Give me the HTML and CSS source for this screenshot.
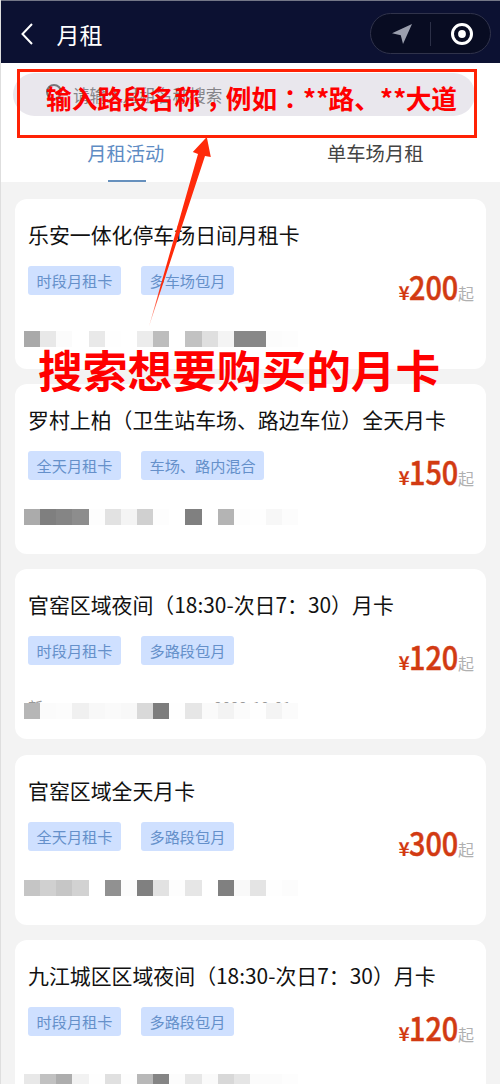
FILE: index.html
```html
<!DOCTYPE html>
<html lang="zh-CN">
<head>
<meta charset="utf-8">
<title>月租</title>
<link rel="stylesheet" href="styles.css">
</head>
<body>
<div class="page">
  <header class="nav">
    <svg class="back" viewBox="0 0 12 22"><path d="M11 1 1.5 11 11 21"/></svg>
    <h1 class="nav-title">月租</h1>
    <div class="capsule">
      <svg class="locate" viewBox="0 0 20 20"><path d="M20 0 0 9.2 8.8 11.2 11 20Z"/></svg>
      <i class="divider"></i>
      <svg class="target" viewBox="0 0 24 24"><circle class="ring" cx="12" cy="12" r="9.5"/><circle class="dot" cx="12" cy="12" r="3.9"/></svg>
    </div>
  </header>
  <section class="top">
    <div class="search">
      <svg class="glass" viewBox="0 0 18 20"><circle cx="8" cy="8" r="7"/><path d="m13 13 4 5"/></svg>
      <span>请输入月租名称搜索</span>
    </div>
    <nav class="tabs">
      <span class="tab active">月租活动</span>
      <span class="tab">单车场月租</span>
    </nav>
  </section>
  <main class="list" id="list"></main>
  <div class="note-box"></div>
  <div class="note-text">输入路段名称<span class="mid comma" lang="zh-TW">，</span>例如<span class="mid" lang="zh-TW">：</span><span class="stars">**</span>路、<span class="stars">**</span>大道</div>
  <svg class="arrow" viewBox="0 0 72 200">
    <defs><linearGradient id="fade" x1="0" y1="1" x2="0" y2="0"><stop offset="0" stop-color="#ff2a0a" stop-opacity=".3"/><stop offset=".2" stop-color="#ff2a0a"/></linearGradient></defs>
    <path fill="url(#fade)" d="M8.8 192 58 19 52.8 17 66.8 2 70.8 22 65 21Z"/>
  </svg>
  <div class="note-big">搜索想要购买的月卡</div>
</div>
<script src="list.js"></script>
</body>
</html>
```
FILE: styles.css
```css
* { box-sizing: border-box; }
body { margin: 0; font-family: "Noto Sans CJK SC", sans-serif; }
.page { position: relative; width: 500px; height: 1084px; overflow: hidden; background: #f3f3f3; border-left: 1px solid #dedede; }
.nav { height: 63px; display: flex; align-items: center; padding: 4px 9px 0 20px; background: #0c1132; border-top: 1px solid #747787; }
.back { width: 12px; height: 22px; fill: none; stroke: #fff; stroke-width: 2; }
.nav-title { margin: 0 auto 0 23.5px; color: #fff; font-size: 23px; font-weight: 400; line-height: 28px; padding-bottom: 1px; }
.capsule { width: 121px; height: 41px; display: flex; align-items: center; border: 1px solid #30334b; border-radius: 21px; background: #080c22; padding-left: 21px; margin-top: -1px; }
.locate { width: 20px; height: 20px; fill: #9b9fae; }
.divider { width: 1px; height: 24px; margin-left: 18px; background: #2c3047; }
.target { width: 24px; height: 24px; margin-left: 19px; }
.ring { fill: none; stroke: #fff; stroke-width: 3; }
.dot { fill: #fff; }
.top { height: 119px; padding-top: 10px; background: #fff; }
.search { width: 462px; height: 43px; margin-left: 12px; padding-left: 33px; display: flex; align-items: center; gap: 9px; border-radius: 22px; background: #e9e7ed; color: #858489; font-size: 16.6px; line-height: 24px; }
.glass { width: 18px; height: 20px; margin-top: -2px; fill: none; stroke: #77767b; stroke-width: 2; }
.tabs { display: grid; grid-template-columns: 1fr 1fr; height: 66px; text-align: center; }
.tab { position: relative; color: #444; font-size: 19.3px; line-height: 28px; padding-top: 23px; }
.active { color: #5e8cc4; }
.active::after { content: ""; position: absolute; left: 107px; bottom: 0; width: 38px; height: 2px; background: #6690bd; }
.list { display: flex; flex-direction: column; gap: 15.4px; padding: 16.6px 14px 0; }
.card { flex: none; width: 471px; height: 170px; background: #fff; border-radius: 12px; padding: 20px 12px 0 13px; }
.title { margin: 0; color: #111; font-size: 20.9px; line-height: 30px; font-weight: 400; white-space: nowrap; }
.info { display: flex; align-items: flex-start; height: 47px; padding-top: 17px; }
.tag { height: 29px; padding: 0 8.5px; margin-right: 20px; border-radius: 3px; background: #cfe0ff; color: #6590ca; font-size: 15.2px; line-height: 28px; white-space: nowrap; }
.price { margin-left: auto; display: flex; align-items: baseline; color: #d23a12; line-height: 40px; }
.yen { font-size: 19px; font-weight: 700; width: 11px; }
.num { font-size: 32px; font-weight: 500; -webkit-text-stroke: .5px #d23a12; width: 48.5px; transform: scaleX(.9); transform-origin: left; }
.unit { font-size: 16px; color: #b0b0b0; }
.meta { position: relative; height: 16.2px; margin-left: -4px; }
.mosaic { display: flex; height: 16.2px; }
.cell { width: 16.15px; height: 16.2px; }
.peek { position: absolute; top: -3px; height: 3px; overflow: hidden; font-size: 15px; line-height: 13px; color: #999; white-space: nowrap; }
.note-box { position: absolute; left: 16px; top: 69px; width: 460px; height: 69px; border: 3px solid #ff2205; }
.note-text { position: absolute; left: 45px; top: 79px; color: red; font-size: 25.7px; line-height: 38px; font-weight: 700; white-space: nowrap; }
.mid { font-family: "Noto Sans CJK TC", sans-serif; }
.comma { display: inline-block; transform: translateY(7px); }
.stars { display: inline-block; width: 25.7px; letter-spacing: .3px; }
.arrow { position: absolute; left: 139px; top: 135px; width: 72px; height: 200px; }
.note-big { position: absolute; left: 37px; top: 337px; color: red; font-size: 44.7px; line-height: 64px; font-weight: 700; white-space: nowrap; }
```
FILE: list.js
```js
const cards = [
  { title: "乐安一体化停车场日间月租卡", tags: ["时段月租卡", "多车场包月"], price: 200, top: 35.4,
    cells: "a9 e8 fb ff e9 fe ff ec bd ff c2 df f4 88 88 fc fd", peeks: [] },
  { title: "罗村上柏（卫生站车场、路边车位）全天月卡", tags: ["全天月租卡", "车场、路内混合"], price: 150, top: 28,
    cells: "ab 7f 85 8d fd e2 f4 d0 fd ff 80 ff b4 fd fe f7 fc", peeks: [] },
  { title: "官窑区域夜间（18:30-次日7：30）月卡", tags: ["时段月租卡", "多路段包月"], price: 120, top: 36.5,
    cells: "b6 fb fc f0 f8 fa f8 d9 7d fe e6 fa f3 fb fe f4 fb", peeks: [[4, "新"], [190, "2022-10-01"]] },
  { title: "官窑区域全天月卡", tags: ["全天月租卡", "多路段包月"], price: 300, top: 28.3,
    cells: "c5 d0 c6 d2 ff 91 fc 80 e2 fd e6 ff 80 f9 e4 fe fc", peeks: [] },
  { title: "九江城区区域夜间（18:30-次日7：30）月卡", tags: ["时段月租卡", "多路段包月"], price: 120, top: 37,
    cells: "e8 c1 ad f2 fe e0 fd b8 85 fc e7 fa d8 e5 fb fb fd", peeks: [] }
];
document.getElementById("list").innerHTML = cards.map(c => `
<article class="card">
  <h2 class="title">${c.title}</h2>
  <div class="info">
    ${c.tags.map(t => `<span class="tag">${t}</span>`).join("")}
    <div class="price"><span class="yen">¥</span><span class="num">${c.price}</span><span class="unit">起</span></div>
  </div>
  <div class="meta" style="margin-top:${c.top}px">
    ${c.peeks.map(p => `<span class="peek" style="left:${p[0]}px">${p[1]}</span>`).join("")}
    <div class="mosaic">${c.cells.split(" ").map(v => `<i class="cell" style="background:#${v + v + v}"></i>`).join("")}</div>
  </div>
</article>`).join("");
```
